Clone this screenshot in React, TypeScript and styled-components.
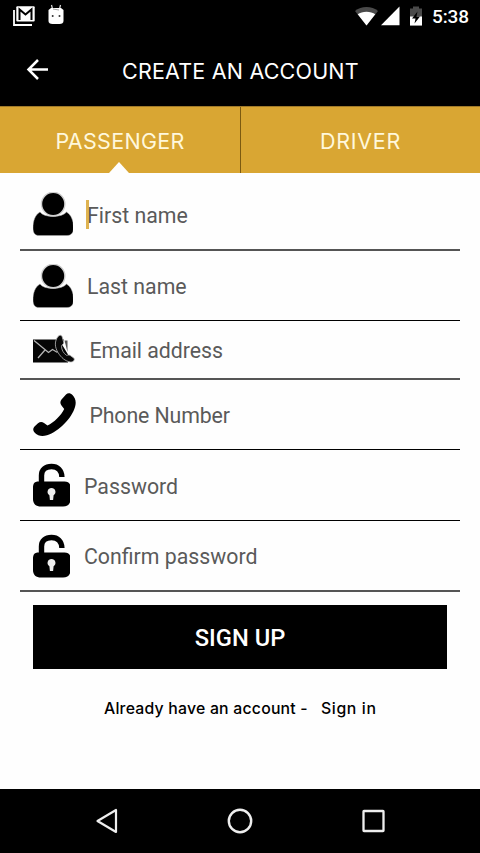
import React from "react";
import styled, { createGlobalStyle } from "styled-components";

const GlobalStyle = createGlobalStyle`
  * { box-sizing: border-box; }
  html, body { margin: 0; padding: 0; }
  body { background: #fff; }
`;

const GOLD = "#d9a633";

const Screen = styled.div`
  width: 480px;
  height: 853px;
  display: flex;
  flex-direction: column;
  background: #fefefe;
  font-family: Roboto, sans-serif;
  overflow: hidden;
`;

const StatusBar = styled.div`
  height: 34px;
  flex: none;
  padding: 0 11px 0 12px;
  display: flex;
  justify-content: space-between;
  background: #000;
  color: #fff;
`;

const StatusGroup = styled.div<{ $gap: number }>`
  display: flex;
  align-items: flex-start;
  gap: ${(p) => p.$gap}px;
  svg { display: block; margin-top: 4px; }
`;

const Clock = styled.span`
  margin-left: 5px;
  margin-top: 5px;
  font-size: 19px;
  line-height: 24px;
  font-weight: 500;
  letter-spacing: -0.1px;
`;

const Header = styled.header`
  height: 72px;
  flex: none;
  display: flex;
  align-items: center;
  padding-left: 26px;
  background: #000;
  color: #fff;
`;

const BackButton = styled.button`
  width: 96px;
  height: 40px;
  padding: 0;
  border: 0;
  background: none;
  display: flex;
  align-items: center;
`;

const Title = styled.h1`
  margin: 1px 0 0;
  font: 400 21.5px/28px Inter, sans-serif;
  letter-spacing: 0.2px;
  white-space: nowrap;
`;

const Tabs = styled.nav`
  height: 67px;
  flex: none;
  display: grid;
  grid-template-columns: 241px 239px;
  background: ${GOLD};
  border-top: 1px solid #a07a2a;
`;

const Tab = styled.button<{ $active?: boolean; $spacing: number }>`
  position: relative;
  padding: 1px 0 0;
  border: 0;
  border-right: ${(p) => (p.$active ? "1px solid #7c5a10" : "0")};
  background: none;
  color: #fff8dc;
  font: 400 21.5px/28px Inter, sans-serif;
  letter-spacing: ${(p) => p.$spacing}px;
`;

const TabPointer = styled.span`
  position: absolute;
  left: 109px;
  bottom: 0;
  border: 10px solid transparent;
  border-top: 0;
  border-bottom: 11px solid #fefefe;
`;

const Form = styled.main`
  flex: 1;
  display: flex;
  flex-direction: column;
  padding: 6px 20px 0;
`;

const Field = styled.label<{ $height: number; $soft?: boolean }>`
  height: ${(p) => p.$height}px;
  flex: none;
  display: flex;
  align-items: center;
  gap: 14px;
  padding-left: 13px;
  border-bottom: ${(p) => (p.$soft ? "2px solid #555" : "1px solid #000")};
  svg { display: block; flex: none; }
`;

const FieldText = styled.span<{ $spacing: number }>`
  position: relative;
  margin-top: 3px;
  margin-left: ${(p) => (p.$spacing < 0 ? -0.6 : 0)}px;
  color: #5a5a5a;
  font-size: 21.3px;
  line-height: 28px;
  letter-spacing: ${(p) => p.$spacing}px;
  white-space: nowrap;
`;

const Caret = styled.i`
  position: absolute;
  left: -1px;
  top: -2px;
  width: 3px;
  height: 29px;
  background: ${GOLD};
  opacity: 0.85;
`;

const SignUp = styled.button`
  width: 414px;
  height: 64px;
  flex: none;
  margin: 13px 0 0 13px;
  padding: 2px 0 0;
  border: 0;
  background: #000;
  color: #fff;
  font: 500 23.7px/30px Roboto, sans-serif;
`;

const Prompt = styled.p`
  margin: 29px 0 0 84px;
  display: flex;
  gap: 13px;
  color: #000;
  font: 500 15.8px/22px Inter, sans-serif;
  white-space: nowrap;
`;

const PromptText = styled.span<{ $spacing: number }>`
  letter-spacing: ${(p) => p.$spacing}px;
`;

const NavBar = styled.footer`
  height: 64px;
  flex: none;
  display: flex;
  align-items: center;
  justify-content: space-between;
  padding: 0 94px;
  background: #000;
  svg { display: block; }
`;

const UserIcon = () => (
  <svg width="40" height="44" viewBox="0 0 40 44">
    <path d="M7 20C2 23 0 29 0 36c0 5 2 7.500 6 7.500h28c4 0 6.500-2.500 6.500-7.500 0-7-2-13-7-16C29 26 11 26 7 20z" fill="#000" stroke="#aaa" strokeWidth=".5" />
    <circle cx="20.200" cy="12" r="11.700" fill="#000" stroke="#d0d0d0" strokeWidth="1.400" />
  </svg>
);

const MailIcon = () => (
  <svg width="43" height="32" viewBox="0 0 43 32" fill="none">
    <path d="M0 5.500h31l-2 5 6 10v8H0z" fill="#050505" />
    <path d="M1 6.500l14.500 12 4-3 5 3M12 16L5 24" stroke="#b5b5b5" strokeWidth="1.300" />
    <path d="M31.500 6.500h3V18z" fill="#555" />
    <path d="M25 2.500c-3.500 4.500-3.500 10.500 0 16 3 5 7.500 9 12.500 9.500 3 0 4.500-2 3.500-3.800l-4-2.900c-1.500-1-2.500.2-3.500 0-3-2-5-5.500-5-9 0-1.500 2.500-2 2.200-4l-1.500-5.500c-.8-2-2.700-2-4.200-.3z" fill="#080808" stroke="#bbb" strokeWidth=".8" />
  </svg>
);

const PhoneIcon = () => (
  <svg width="43" height="44" viewBox="0 0 43 44">
    <path d="M28.500 6.500L33 1.500c2-2 4.500-1.500 6.500.5 3 3 4 7 2.500 12C39 25 26 38.500 14 42.300c-5 1.500-9 .7-12-2.300-2-2-2.500-4.500-.5-6.500L5 30.300c2-1.700 4-1.700 6-.3l3.500 2.500C21 29.500 28 22.500 31.200 16L28.500 12.500c-1.500-2-1.500-4 0-6z" fill="#000" />
  </svg>
);

const LockIcon = () => (
  <svg width="37" height="44" viewBox="0 0 37 44">
    <path d="M8.500 20.500v-8C8.500 6.500 12.500 3.500 18.500 3.500S28.700 7 28.900 14" fill="none" stroke="#000" strokeWidth="5.400" />
    <path d="M5.500 18.500h26c4 0 6 2 6 6V36c0 5-3 7.500-7.500 7.500H8C3 43.500 0 41 0 36V24.500c0-4 1.500-6 5.500-6z" fill="#000" />
    <path d="M18.500 25a3.900 3.900 0 0 0-2.100 7.200l.5 4.800h3.200l.5-4.800a3.900 3.900 0 0 0-2.100-7.200z" fill="#eee" />
  </svg>
);

const fields = [
  { label: "First name", icon: <UserIcon />, height: 72, soft: true, spacing: 0, caret: true },
  { label: "Last name", icon: <UserIcon />, height: 70, spacing: 0 },
  { label: "Email address", icon: <MailIcon />, height: 59, soft: true, spacing: -0.03 },
  { label: "Phone Number", icon: <PhoneIcon />, height: 70, spacing: -0.1 },
  { label: "Password", icon: <LockIcon />, height: 71, spacing: 0 },
  { label: "Confirm password", icon: <LockIcon />, height: 71, soft: true, spacing: 0 },
];

export default function App() {
  return (
    <>
      <GlobalStyle />
      <Screen>
        <StatusBar>
          <StatusGroup $gap={12}>
            <svg width="24" height="24" viewBox="0 0 24 24" fill="none">
              <path d="M2 6v15h18" stroke="#fff" strokeWidth="1.800" />
              <rect x="4.300" y="2.300" width="18.400" height="15.200" rx="1" fill="#fff" />
              <path d="M7.500 16V5.500l6 5 6-5V16" stroke="#000" strokeWidth="2" />
            </svg>
            <svg width="17" height="24" viewBox="0 0 17 24">
              <path d="M3.500 1l1 4M12.500 1l-1 4" stroke="#ddd" strokeWidth="1.200" />
              <path d="M3 4h10l2.500 2v11c0 2-1.500 3-4 3h-7C2 20 .5 19 .5 17V6z" fill="#fff" />
              <path d="M5 5l6 1" stroke="#888" strokeWidth=".8" />
              <circle cx="4.700" cy="12" r="1" fill="#333" />
              <circle cx="11.500" cy="12" r="1" fill="#333" />
            </svg>
          </StatusGroup>
          <StatusGroup $gap={3}>
            <svg width="23" height="24" viewBox="0 0 23 24">
              <path d="M0 7C6 1.500 17 1.500 23 7L11.500 21.500z" fill="#4a4a4a" />
              <path d="M2.700 10.300C7 6.800 16 6.800 20.300 10.300L11.500 21.500z" fill="#fff" />
            </svg>
            <svg width="19" height="24" viewBox="0 0 19 24">
              <path d="M0 21.300L18.500 2.500v18.800z" fill="#fff" />
            </svg>
            <svg width="21" height="24" viewBox="0 0 21 24">
              <path d="M7 4.500h3V2.500h6v2h3v17H7z" fill="#4a4a4a" />
              <path d="M7 12.500h12v9H7z" fill="#fff" />
              <path d="M14.500 7.500L9 14.500h3.500l-1 5 5.500-7h-3.500z" fill="#000" />
            </svg>
            <Clock>5:38</Clock>
          </StatusGroup>
        </StatusBar>
        <Header>
          <BackButton aria-label="Back">
            <svg width="23" height="24" viewBox="0 0 23 24" fill="none" stroke="#fff" strokeWidth="2.500">
              <path d="M22 11.500H3M12 2L2.500 11.500 12 21" />
            </svg>
          </BackButton>
          <Title>CREATE AN ACCOUNT</Title>
        </Header>
        <Tabs>
          <Tab $active $spacing={0.3}>
            PASSENGER
            <TabPointer />
          </Tab>
          <Tab $spacing={0.7}>DRIVER</Tab>
        </Tabs>
        <Form>
          {fields.map((f) => (
            <Field key={f.label} $height={f.height} $soft={f.soft}>
              {f.icon}
              <FieldText $spacing={f.spacing}>
                {f.caret && <Caret />}
                {f.label}
              </FieldText>
            </Field>
          ))}
          <SignUp>SIGN UP</SignUp>
          <Prompt>
            <PromptText $spacing={0.22}>Already have an account -</PromptText>
            <PromptText $spacing={0.65}>Sign in</PromptText>
          </Prompt>
        </Form>
        <NavBar>
          <svg width="26" height="28" viewBox="0 0 26 28" fill="none" stroke="#eee" strokeWidth="2.200">
            <path d="M22 3v22L3.500 14z" strokeLinejoin="round" />
          </svg>
          <svg width="26" height="28" viewBox="0 0 26 28" fill="none" stroke="#eee" strokeWidth="2.400">
            <circle cx="13" cy="14" r="11.200" />
          </svg>
          <svg width="26" height="28" viewBox="0 0 26 28" fill="none" stroke="#eee" strokeWidth="2.300">
            <rect x="3.500" y="4" width="20" height="20" rx=".5" />
          </svg>
        </NavBar>
      </Screen>
    </>
  );
}
